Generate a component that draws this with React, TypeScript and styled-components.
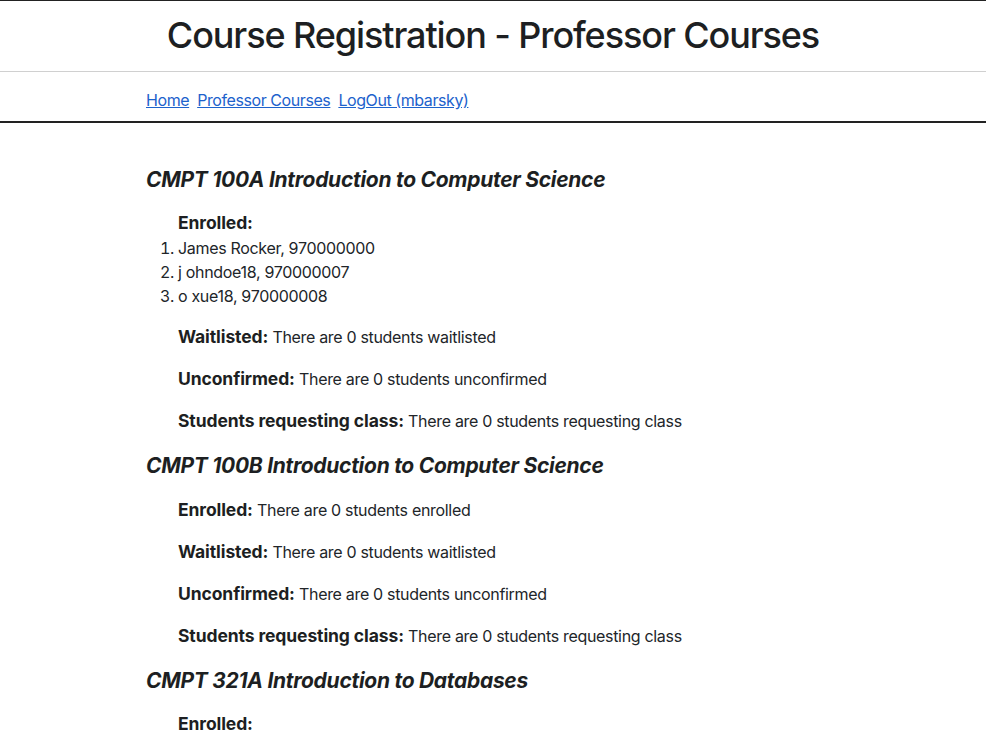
import React from 'react';
import styled, { createGlobalStyle } from 'styled-components';

const GlobalStyle = createGlobalStyle`
  body {
    margin: 0;
    background: #fff;
    color: #212529;
    font-family: Inter, "Noto Sans", "Liberation Sans", sans-serif;
    font-size: 16px;
    letter-spacing: -0.32px;
  }
`;

const Header = styled.header`
  border-top: 1px solid #222;
  padding: 13px 0 14px;
  border-bottom: 1px solid #d0d0d0;
  text-align: center;
`;

const Title = styled.h1`
  margin: 0;
  font-size: 36px;
  font-weight: 500;
  line-height: 43px;
  letter-spacing: -1.1px;
  color: #1d1f22;
`;

const NavBar = styled.nav`
  border-bottom: 2px solid #222;
  padding: 16px 0 9px;
`;

const Container = styled.div`
  max-width: 694px;
  margin: 0 auto;
`;

const NavLinks = styled.div`
  display: flex;
  gap: 8px;
  line-height: 24px;
  letter-spacing: -0.42px;
`;

const NavLink = styled.a`
  color: #1d62cc;
  text-decoration: underline;
  cursor: pointer;
`;

const Main = styled.main`
  padding-top: 40px;
`;

const CourseTitle = styled.h3`
  margin: 2px 0 17px;
  font-size: 21px;
  font-weight: 700;
  font-style: italic;
  line-height: 30px;
  letter-spacing: -0.28px;
  color: #1d1f22;
`;

const Row = styled.div`
  padding-left: 32px;
  margin-bottom: 18px;
  line-height: 24px;
`;

const Label = styled.span`
  font-size: 17.5px;
  font-weight: 700;
  letter-spacing: -0.1px;
  color: #1d1f22;
`;

const EnrolledLabel = styled(Label)`
  display: block;
  padding-left: 32px;
  margin-bottom: 2px;
  line-height: 22px;
`;

const StudentList = styled.ol`
  margin: 0 0 17px;
  padding-left: 32px;
  line-height: 24px;
`;

type Course = {
  title: string;
  enrolled: string[];
  partial?: boolean;
};

const courses: Course[] = [
  {
    title: 'CMPT 100A Introduction to Computer Science',
    enrolled: ['James Rocker, 970000000', 'j ohndoe18, 970000007', 'o xue18, 970000008'],
  },
  { title: 'CMPT 100B Introduction to Computer Science', enrolled: [] },
  { title: 'CMPT 321A Introduction to Databases', enrolled: ['James Rocker, 970000000'], partial: true },
];

const CourseBlock = ({ course }: { course: Course }) => (
  <section>
    <CourseTitle>{course.title}</CourseTitle>
    {course.enrolled.length > 0 ? (
      <>
        <EnrolledLabel>Enrolled:</EnrolledLabel>
        {!course.partial && (
          <StudentList>
            {course.enrolled.map((s) => (
              <li key={s}>{s}</li>
            ))}
          </StudentList>
        )}
      </>
    ) : (
      <Row>
        <Label>Enrolled:</Label> There are 0 students enrolled
      </Row>
    )}
    {!course.partial && (
      <>
        <Row>
          <Label>Waitlisted:</Label> There are 0 students waitlisted
        </Row>
        <Row>
          <Label>Unconfirmed:</Label> There are 0 students unconfirmed
        </Row>
        <Row>
          <Label>Students requesting class:</Label> There are 0 students requesting class
        </Row>
      </>
    )}
  </section>
);

const App = () => (
  <>
    <GlobalStyle />
    <Header>
      <Title>Course Registration - Professor Courses</Title>
    </Header>
    <NavBar>
      <Container>
        <NavLinks>
          <NavLink>Home</NavLink>
          <NavLink>Professor Courses</NavLink>
          <NavLink>LogOut (mbarsky)</NavLink>
        </NavLinks>
      </Container>
    </NavBar>
    <Main>
      <Container>
        {courses.map((c) => (
          <CourseBlock key={c.title} course={c} />
        ))}
      </Container>
    </Main>
  </>
);

export default App;
